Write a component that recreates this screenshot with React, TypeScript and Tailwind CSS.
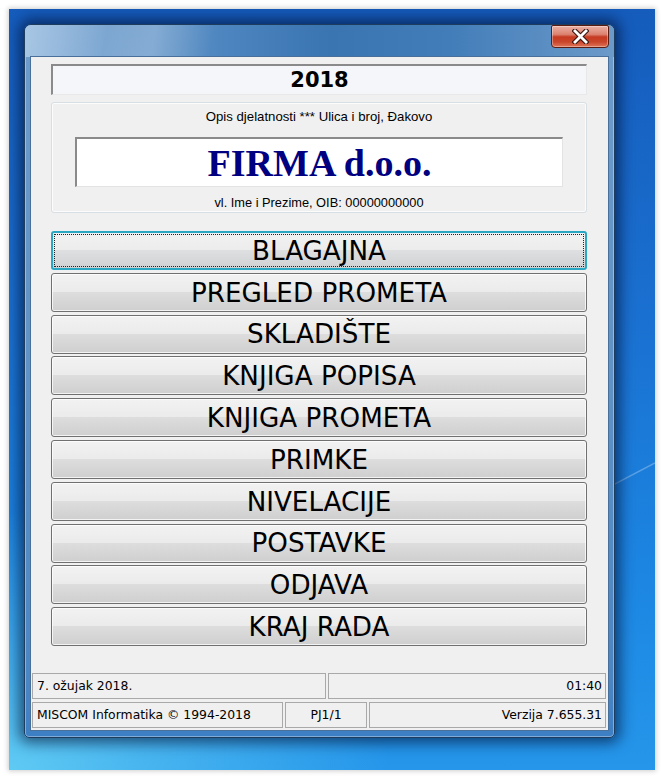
import React from "react";

const items = [
  "BLAGAJNA",
  "PREGLED PROMETA",
  "SKLADIŠTE",
  "KNJIGA POPISA",
  "KNJIGA PROMETA",
  "PRIMKE",
  "NIVELACIJE",
  "POSTAVKE",
  "ODJAVA",
  "KRAJ RADA",
];

function MenuButton({ label, focused }: { label: string; focused: boolean }) {
  if (focused) {
    return (
      <button className="h-[39px] w-full rounded-[3px] border-2 border-[#2aa7c2] bg-[linear-gradient(180deg,#f2f2f2_0%,#ececec_48%,#dedfe0_50%,#d0d1d2_100%)] p-[1px]">
        <div className="flex h-full w-full items-center justify-center border border-dotted border-[#222] pt-[1px] font-['DejaVu_Sans',sans-serif] text-[26.2px] leading-none text-black">
          {label}
        </div>
      </button>
    );
  }
  return (
    <button className="h-[39px] w-full rounded-[3px] border border-[#707070] bg-[linear-gradient(180deg,#f2f2f2_0%,#ebebeb_48%,#dddddd_50%,#cfcfcf_100%)] shadow-[inset_0_0_0_1px_rgba(255,255,255,0.75)]">
      <div className="flex h-full w-full items-center justify-center pt-[1px] font-['DejaVu_Sans',sans-serif] text-[26.2px] leading-none text-black">
        {label}
      </div>
    </button>
  );
}

export default function App() {
  return (
    <div className="h-[778px] w-[663px] bg-white pl-[9px] pt-[9px]">
      <div className="relative h-[761px] w-[646px] overflow-hidden bg-[radial-gradient(ellipse_380px_260px_at_0%_100%,#5fcaf3_0%,rgba(95,202,243,0.6)_35%,rgba(95,202,243,0)_100%),linear-gradient(180deg,#155cbc_0%,#1a70d0_40%,#1c86e2_75%,#2596ea_100%)] pl-[15px] pt-[15px] shadow-[0_0_5px_1px_rgba(0,0,0,0.2)]">
        <svg
          className="absolute left-[600px] top-[420px]"
          width="46"
          height="60"
          viewBox="0 0 46 60"
        >
          <path d="M0 58 L46 34" stroke="rgba(255,255,255,0.28)" strokeWidth="1.5" />
        </svg>

        {/* Window */}
        <div className="relative flex h-[714px] w-[591px] flex-col rounded-b-[5px] rounded-t-[7px] border border-[#1d3c5e] bg-[linear-gradient(180deg,#6e9ccb_0%,#5f92c6_50%,#4a86c4_92%,#3d7fc4_100%)] shadow-[0_0_14px_5px_rgba(0,12,45,0.6),inset_0_0_0_1px_rgba(255,255,255,0.35)]">
          {/* Title bar */}
          <div className="flex h-[32px] justify-end rounded-t-[6px] bg-[linear-gradient(100deg,rgba(255,255,255,0.25)_0%,rgba(255,255,255,0.05)_14%,rgba(255,255,255,0.2)_22%,rgba(255,255,255,0)_32%),linear-gradient(90deg,#8bb3db_0%,#729fcd_16%,#4c85bf_34%,#3a74b1_52%,#427db9_72%,#6c9ac9_100%)] pr-[5px]">
            <div className="flex h-[23px] w-[58px] items-center justify-center rounded-b-[4px] rounded-t-[2px] border border-[#5a1d14] bg-[linear-gradient(180deg,#eab0a3_0%,#dc8270_40%,#c63b22_52%,#c9452a_75%,#e07458_100%)] shadow-[inset_0_0_0_1px_rgba(255,255,255,0.35)]">
              <svg width="17" height="15" viewBox="0 0 17 15">
                <path
                  d="M3 2 L14 13 M14 2 L3 13"
                  stroke="#3b1510"
                  strokeWidth="5"
                  strokeLinecap="square"
                />
                <path
                  d="M3 2 L14 13 M14 2 L3 13"
                  stroke="#ffffff"
                  strokeWidth="2.8"
                  strokeLinecap="square"
                />
              </svg>
            </div>
          </div>

          {/* Client area */}
          <div className="ml-[6px] mr-[6px] flex h-[673px] w-[577px] flex-col bg-[#f0f0f0] shadow-[0_0_0_1px_#48709a]">
            <div className="flex flex-col pl-[20px] pr-[21px] pt-[7px]">
              {/* Year box */}
              <div className="flex h-[31px] items-center justify-center border-b border-l-2 border-r border-t-2 border-b-[#e8e8e8] border-l-[#8a8a8a] border-r-[#e8e8e8] border-t-[#8a8a8a] bg-[#f4f6fa] font-['DejaVu_Sans',sans-serif] text-[21px] font-bold leading-none text-black">
                2018
              </div>

              {/* Group */}
              <div className="mt-[7px] flex h-[111px] flex-col items-center rounded-[3px] border border-[#d8dfe4] px-[23px] pt-[6px] shadow-[inset_0_0_0_1px_rgba(255,255,255,0.8)]">
                <div className="h-[16px] font-['Liberation_Sans',Arial,sans-serif] text-[13.2px] leading-[16px] text-black">
                  Opis djelatnosti *** Ulica i broj, Đakovo
                </div>
                <div className="mt-[12px] flex h-[50px] w-full items-center justify-center border-b border-l-2 border-r border-t-2 border-b-[#e3e3e3] border-l-[#8a8a8a] border-r-[#e3e3e3] border-t-[#8a8a8a] bg-white font-['Liberation_Serif','Times_New_Roman',serif] text-[38px] font-bold leading-none text-[#000080]">
                  FIRMA d.o.o.
                </div>
                <div className="mt-[8px] h-[16px] font-['Liberation_Sans',Arial,sans-serif] text-[12.8px] leading-[16px] text-black">
                  vl. Ime i Prezime, OIB: 00000000000
                </div>
              </div>

              {/* Buttons */}
              <div className="mt-[18px] flex flex-col gap-[2.8px]">
                {items.map((it, i) => (
                  <MenuButton key={it} label={it} focused={i === 0} />
                ))}
              </div>
            </div>

            {/* Status bar */}
            <div className="mt-auto flex flex-col gap-[3px] pb-[2px] pl-[1px] pr-[2px] font-['DejaVu_Sans',sans-serif] text-[12.4px] text-black">
              <div className="flex h-[26px] gap-[2px]">
                <div className="flex w-[294px] items-center border border-[#a9a9a9] pl-[4px]">
                  7. ožujak 2018.
                </div>
                <div className="flex flex-1 items-center justify-end border border-[#a9a9a9] pr-[3px]">
                  01:40
                </div>
              </div>
              <div className="flex h-[26px] gap-[2px]">
                <div className="flex w-[251px] items-center border border-[#a9a9a9] pl-[4px]">
                  MISCOM Informatika © 1994-2018
                </div>
                <div className="flex w-[82px] items-center justify-center border border-[#a9a9a9]">
                  PJ1/1
                </div>
                <div className="flex flex-1 items-center justify-end border border-[#a9a9a9] pr-[3px]">
                  Verzija 7.655.31
                </div>
              </div>
            </div>
          </div>
        </div>
      </div>
    </div>
  );
}
